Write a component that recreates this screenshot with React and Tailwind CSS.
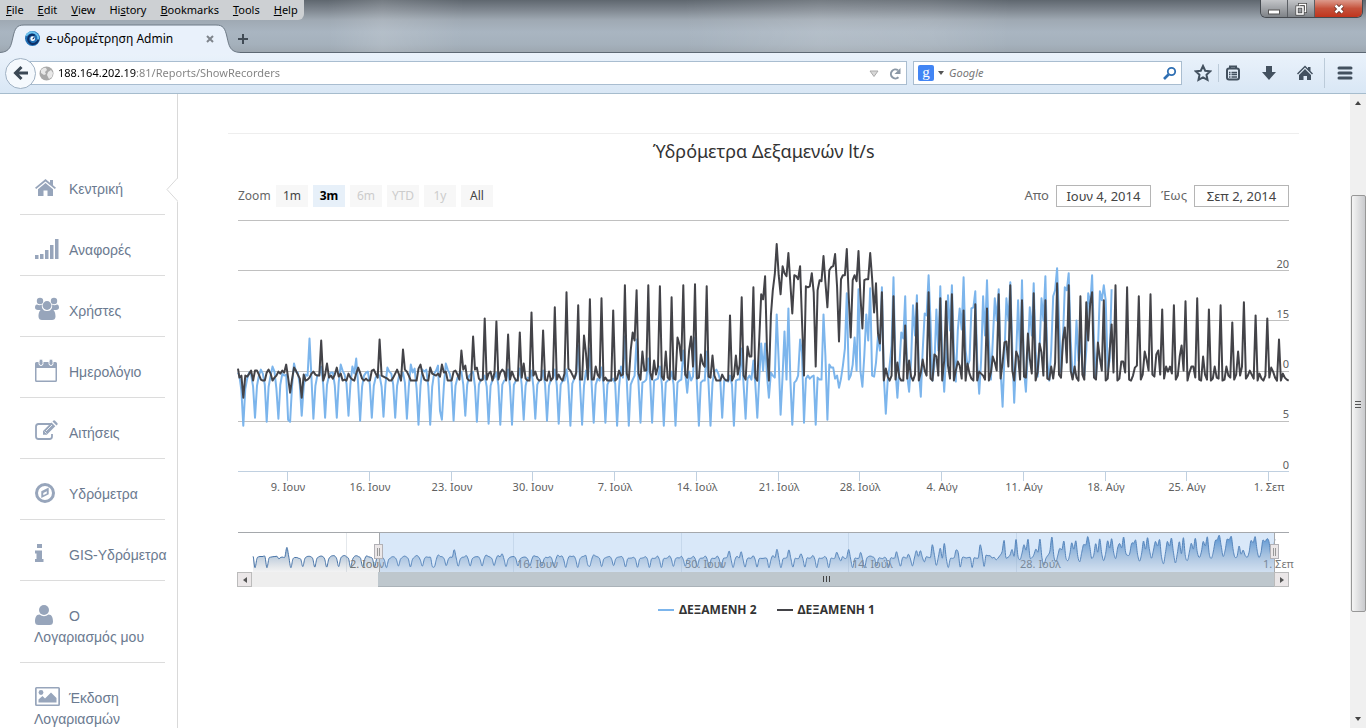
import { useId, useState } from "react";
import clsx from "clsx";

// Six readings a day, in tenths of a litre per second.
const TANK_1 = `
102 93 95 73 95 94|97 100 90 100 100 96|91 90 90 98 101 97|90 93 95 99 97 100|98 106 93 78 91 103|100 96 92 73 96 90
91 93 97 99 96 95|95 130 90 96 107 93|95 92 96 103 94 97|90 91 90 97 93 91|90 97 103 98 92 90|92 90 90 100 101 97
93 131 95 94 93 92|90 90 93 97 101 96|90 121 101 99 95 90|90 90 90 102 106 97|91 90 90 103 97 96|95 97 94 106 98 99
90 90 90 99 100 96|91 120 101 105 92 90|90 134 101 103 92 90|91 152 91 97 99 90|98 149 91 98 101 99|90 136 91 99 94 90
90 138 93 107 92 90|90 158 95 99 92 90|91 140 91 90 99 90|93 163 91 96 92 90|97 178 102 100 96 92|98 165 91 91 135 117
91 171 91 91 104 96|93 172 90 93 90 90|90 160 90 92 100 95|96 185 97 91 120 138|130 180 97 91 119 100|100 185 98 91 110 96
104 184 94 91 119 93|91 173 92 91 133 126|110 185 96 93 120 134|104 186 92 93 116 107|104 184 94 93 115 95|90 90 90 96 92 90
90 155 90 94 115 96|106 173 95 91 124 114|114 183 93 90 130 176|171 194 120 90 155 180|196 226 195 176 204 197|194 217 186 157 195 194
191 204 150 95 184 183|184 197 178 104 180 190|189 214 188 163 200 203|204 216 183 129 191 195|195 221 172 133 190 195|189 219 175 142 190 191
191 217 192 158 187 137|127 178 90 102 94 90|95 174 91 108 93 90|90 145 92 110 94 90|96 167 90 98 111 100|95 178 92 90 116 114
95 172 90 110 169 105|92 176 90 100 109 105|92 160 90 107 97 92|90 166 90 99 97 95|91 162 90 98 114 108
100 176 92 108 128 129|104 185 100 90 119 114|91 170 94 93 137 112|97 177 90 98 127 118|95 170 92 91 104 92|108 187 96 93 130 143
108 185 100 91 104 93|90 174 96 91 168 130|167 178 93 91 128 112|100 170 90 92 119 146|98 185 90 92 109 109|98 183 91 90 95 103
105 174 91 96 119 111|100 176 96 94 116 120|96 161 92 104 99 104|97 165 91 95 114 125|100 169 90 98 104 104|93 172 91 90 114 96
91 161 90 92 104 93|92 165 90 91 104 95|93 148 91 96 119 95|104 168 92 95 100 96|92 155 90 97 92 90|95 152 93 103 99 93|90 131 90 97 93 91|90`;

const TANK_2 = `
98 95 80 45 82 92|98 96 84 53 85 95|101 97 86 49 84 95|104 99 82 52 86 97|95 96 51 49 84 107|99 98 86 55 84 96
95 132 92 52 85 95|96 104 86 53 86 95|98 98 85 53 88 106|100 96 87 55 86 104|97 112 86 50 84 95|98 99 86 53 85 93
96 95 84 54 86 103|99 97 86 53 85 95|93 98 88 52 84 106|98 102 82 46 85 101|99 101 84 46 84 97|100 105 60 51 85 107
101 97 88 50 85 93|97 99 86 55 86 95|97 99 84 49 86 91|92 95 84 47 85 91|93 98 85 46 86 90|91 101 84 46 86 90
92 102 86 51 85 93|92 100 84 52 86 90|91 100 86 50 85 91|92 101 85 47 86 90|90 101 86 45 87 92|96 125 84 46 85 100
92 122 84 48 86 92|90 103 86 48 86 90|90 92 87 45 84 104|93 134 90 45 86 91|95 131 88 48 88 89|91 112 90 48 90 91
92 104 86 45 88 90|92 99 86 45 88 90|91 120 98 78 99 90|94 133 86 45 88 90|90 119 86 45 88 99|101 97 90 53 90 91
89 95 86 45 90 91|91 122 86 52 92 95|91 110 87 53 92 127|100 127 95 73 98 95|93 156 110 56 95 139|91 162 90 46 88 90
95 131 118 48 92 95|92 94 95 46 93 91|91 156 115 51 106 103|103 92 95 83 92 105|122 177 91 95 106 133|100 181 100 84 115 156
130 182 95 94 108 135|120 183 95 57 90 105|125 193 100 73 105 138|132 174 95 79 110 165|135 175 100 74 120 157|155 195 150 90 105 161
120 184 115 79 115 175|140 185 120 89 140 162|141 193 120 105 110 162|163 179 110 77 110 174|135 190 130 91 130 172|150 181 100 64 115 172
150 188 120 68 115 170|113 190 100 79 120 163|135 187 120 94 120 172|150 194 110 90 120 174|180 202 150 99 130 183|180 197 130 94 100 150
110 130 105 95 120 177|165 195 130 94 120 179|170 185 170 100 110 181`;

// The days before the selected range, seen only in the navigator.
const TANK_2_EARLIER = `
100 45 90 98 99 99|98 45 90 96 98 99|100 88 95 96 97 143|95 45 85 94 94 90|85 50 88 98 100 98|88 48 88 97 101 99
86 48 86 99 103 102|88 50 90 101 104 97|88 46 85 100 103 98|90 50 84 102 98 95|88 48 86 95`;

const toReadings = (text) => text.trim().split(/[\s|]+/).map(Number);

const tank1 = toReadings(TANK_1);
const tank2 = toReadings(TANK_2);
const overview = [...toReadings(TANK_2_EARLIER), ...tank2];

const STEP = 1.9467;
const linePoints = (data) =>
  data.map((v, i) => `${Math.max(0, i * STEP - 0.5).toFixed(1)},${(251 - v * 1.004).toFixed(1)}`).join(" ");

// Smooth curve that keeps every peak at its full height.
function overviewPath() {
  const step = 1022 / (overview.length - 1);
  const y = overview.map((v) => 45 - v * 0.207);
  const slope = y.map((v, i) => {
    const before = v - (y[i - 1] ?? v);
    const after = (y[i + 1] ?? v) - v;
    return before * after <= 0 ? 0 : (before + after) / 2;
  });
  let d = `M15,${y[0].toFixed(1)}`;
  for (let i = 1; i < y.length; i++) {
    const x = 15 + i * step;
    const c1 = `${(x - (step * 2) / 3).toFixed(1)},${(y[i - 1] + slope[i - 1] / 3).toFixed(1)}`;
    const c2 = `${(x - step / 3).toFixed(1)},${(y[i] - slope[i] / 3).toFixed(1)}`;
    d += `C${c1} ${c2} ${x.toFixed(1)},${y[i].toFixed(1)}`;
  }
  return d;
}

const weeks = ["9. Ιουν", "16. Ιουν", "23. Ιουν", "30. Ιουν", "7. Ιούλ", "14. Ιούλ", "21. Ιούλ", "28. Ιούλ", "4. Αύγ", "11. Αύγ", "18. Αύγ", "25. Αύγ", "1. Σεπ"];
const ranges = [
  { label: "1m" },
  { label: "3m" },
  { label: "6m", disabled: true },
  { label: "YTD", disabled: true },
  { label: "1y", disabled: true },
  { label: "All" },
];

const icons = {
  home: (
    <>
      <path d="M11.5 5 19 11.300V18h-5.500v-5.500h-4V18H4v-6.700z" />
      <path d="M11.500 1 1 9.700l1.200 1.400 9.300-7.700 9.300 7.700L22 9.700l-3-2.500V2h-3v2.700z" />
    </>
  ),
  signal: <path d="M1 16h3.500v4H1zM6 15h3.500v5H6zM11 11h3.500v9H11zM16 6h3.500v14H16zM21 0h3.500v20H21z" />,
  users: (
    <>
      <circle cx="6" cy="1" r="3.200" />
      <circle cx="20" cy="1" r="3.200" />
      <circle cx="13" cy="5.500" r="4.400" />
      <path d="M3 4.500c1.800 1 3.500 1 5 0-.6 2 .1 4.300 1.600 5.500H4C2 10 1 9 1 7.500 1 6 1.500 4.500 3 4.500zM23 4.500c-1.800 1-3.500 1-5 0 .6 2-.1 4.300-1.600 5.500H22c2 0 3-1 3-2.500 0-1.500-.5-3-2-3z" />
      <path d="M8.500 9.500c3 2 6 2 9 0 3 0 4 3.500 4 7 0 2.500-1.500 3.500-3.500 3.500H8c-2 0-3.500-1-3.500-3.500 0-3.500 1-7 4-7z" />
    </>
  ),
  calendar: (
    <>
      <path fillRule="evenodd" d="M2.500 1h19q1.500 0 1.500 1.500v17q0 1.500-1.500 1.500h-19Q1 21 1 19.500v-17Q1 1 2.500 1zM2.500 7v12.500h19V7z" />
      <rect x="5" y="-2" width="4" height="6.500" rx="2" stroke="white" />
      <rect x="15" y="-2" width="4" height="6.500" rx="2" stroke="white" />
    </>
  ),
  edit: (
    <>
      <path d="M17 2H4.500Q2 2 2 4.500v10Q2 17 4.500 17h11q2.500 0 2.500-2.500V12" fill="none" stroke="currentColor" strokeWidth="1.800" />
      <path d="m9 9 8.500-8.500 3.800 3.800-8.500 8.500H9zM18.500-.5l1-1q.8-.6 1.600.2l2.200 2.200q.8.8.2 1.600l-1 1z" />
      <path d="m10.500 9.500 2 2M12 9l6-6" stroke="white" strokeWidth=".8" />
    </>
  ),
  compass: (
    <>
      <circle cx="11" cy="10" r="8.500" fill="none" stroke="currentColor" strokeWidth="3" />
      <path fillRule="evenodd" d="M14.700 4.500v6.800L7.300 15V8.300zM12.800 8.300 9.300 10v2.200l3.500-1.700z" />
    </>
  ),
  info: <path d="M3 0h5v4H3zM1 6.500h7V15h1.500v3H1v-3h1.500V9.500H1z" />,
  user: (
    <>
      <circle cx="10" cy="5" r="5" />
      <path d="M5.500 9.500q4.500 3.500 9 0C18 9.500 19 13 19 16.500q0 3.500-3.500 3.500h-11Q1 20 1 16.500C1 13 2 9.500 5.500 9.500z" />
    </>
  ),
  image: (
    <>
      <path fillRule="evenodd" d="M2.500 0h22Q26 0 26 1.500v16q0 1.500-1.500 1.500h-22Q1 19 1 17.500v-16Q1 0 2.500 0zM2.700 1.600v15.800h21.600V1.600z" />
      <circle cx="7" cy="5.500" r="2.400" />
      <path d="M4.500 15.500v-3l4-3.500 2.500 2.500 6-6 5.500 5.500v4.500z" />
    </>
  ),
};

const menu = [
  { icon: "home", lines: ["Κεντρική"], active: true },
  { icon: "signal", lines: ["Αναφορές"] },
  { icon: "users", lines: ["Χρήστες"] },
  { icon: "calendar", lines: ["Ημερολόγιο"] },
  { icon: "edit", lines: ["Αιτήσεις"] },
  { icon: "compass", lines: ["Υδρόμετρα"] },
  { icon: "info", lines: ["GIS-Υδρόμετρα"] },
  { icon: "user", lines: ["Ο", "Λογαριασμός μου"] },
  { icon: "image", lines: ["Έκδοση", "Λογαριασμών"] },
];

function TitleBar() {
  const items = [["", "F", "ile"], ["", "E", "dit"], ["", "V", "iew"], ["Hi", "s", "tory"], ["", "B", "ookmarks"], ["", "T", "ools"], ["", "H", "elp"]];
  return (
    <header className="h-[53px] shrink-0 border-b border-[#5d6873] bg-[linear-gradient(90deg,transparent_24%,#ffffff22_28%,transparent_34%,transparent_50%,#ffffff22_60%,#ffffff18_68%,transparent_74%),linear-gradient(180deg,#5f676f_0,#7f8790_10px,#9fa9b3_20px,#a9b5c1_32px,#a5b1bc_44px,#9da7b0_52px)]">
      <div className="flex h-[20px] justify-between">
        <nav className="flex h-[20px] items-center gap-3.5 rounded-br-md bg-[#cdd0d3] px-1.5 text-[11px] text-black">
          {items.map(([pre, key, post]) => (
            <button key={key + post} type="button">
              {pre}<u>{key}</u>{post}
            </button>
          ))}
        </nav>
        <div className="mr-[3px] flex h-[18px] overflow-hidden rounded-b-md border border-t-0 border-[#454a50] text-white">
          <button type="button" aria-label="Minimize" className="grid w-[27px] place-items-center border-r border-[#5b5f64] bg-linear-to-b from-[#c3c5c8] to-[#7e8287]">
            <svg width="12" height="14"><rect x=".5" y="8" width="11" height="4" fill="white" stroke="#555" /></svg>
          </button>
          <button type="button" aria-label="Restore" className="grid w-[27px] place-items-center border-r border-[#5b5f64] bg-linear-to-b from-[#c3c5c8] to-[#7e8287]">
            <svg width="12" height="14" fill="none"><path d="M4.500 4V2.500h6v7H9" stroke="#444" strokeWidth="3" /><path d="M4.500 4V2.500h6v7H9" stroke="white" strokeWidth="1.500" /><rect x="2" y="5" width="6" height="7" stroke="#444" strokeWidth="3" /><rect x="2" y="5" width="6" height="7" stroke="white" strokeWidth="1.600" /></svg>
          </button>
          <button type="button" aria-label="Close" className="grid w-[47px] place-items-center bg-linear-to-b from-[#dc9a8c] via-[#c5513b] to-[#c0341c]">
            <svg width="14" height="14"><path d="m3.500 3.500 7 7m0-7-7 7" stroke="#5a2a22" strokeWidth="4" /><path d="m3.500 3.500 7 7m0-7-7 7" stroke="white" strokeWidth="2.500" /></svg>
          </button>
        </div>
      </div>
      <div className="flex h-[33px] items-end">
        <div className="relative h-[29px] w-[240px]">
          <svg className="absolute inset-0" width="240" height="30">
            <path d="M0 30V28.500C10 28 11 22 13 13 15 4 17 1 24 1H216C223 1 225 4 227 13 229 22 230 28 240 28.500V30z" fill="#e9f1fb" />
            <path d="M0 28.500C10 28 11 22 13 13 15 4 17 1 24 1H216C223 1 225 4 227 13 229 22 230 28 240 28.500" fill="none" stroke="#6f7b87" />
          </svg>
          <div className="relative flex h-full items-center pl-[25px] text-[12px] text-black">
            <svg width="15" height="15" viewBox="0 0 14 14" fill="none">
              <circle cx="7" cy="7" r="7" fill="#1f6fb5" />
              <path d="M1 4.500Q4.500-.5 9.500 2 14 5 11.500 9.500" stroke="#6fc3ee" strokeWidth="1.600" />
              <path d="M12.500 8Q11 13 6 12 2 10 3.200 6 5 2.500 9 4" stroke="#0d2f66" strokeWidth="1.800" />
              <circle cx="7.200" cy="7.200" r="2.200" fill="white" />
              <path d="M7 7.500q1.500-.2 1.500-1.800" stroke="#0d2f66" />
            </svg>
            <span className="ml-1.5 grow">e-υδρομέτρηση Admin</span>
            <button type="button" aria-label="Close tab" className="mr-[26px]">
              <svg width="8" height="8"><path d="m1 1 6 6m0-6-6 6" stroke="#7f858c" strokeWidth="2" /></svg>
            </button>
          </div>
        </div>
        <button type="button" aria-label="New tab" className="mb-2 ml-[-3px]">
          <svg width="12" height="12"><path d="M6 1v10M1 6h10" stroke="#414b55" strokeWidth="2" /></svg>
        </button>
      </div>
    </header>
  );
}

function Toolbar() {
  return (
    <div className="flex h-[41px] shrink-0 items-center border-b border-[#a6bccd] bg-linear-to-b from-[#eaf2fb] to-[#d9e7f5] text-[11px]">
      <button type="button" aria-label="Back" className="z-10 ml-[5px] grid size-[31px] shrink-0 place-items-center rounded-full border border-[#9fb1c3] bg-[#f5f9fd]">
        <svg width="16" height="16" fill="none" stroke="#3b4855" strokeWidth="3"><path d="M15 8H3M8.500 2 2.500 8l6 6" /></svg>
      </button>
      <div className="-ml-2 flex h-[24px] grow items-center gap-1 border border-[#a9bdd0] bg-white pt-px pr-1 pl-[10px]">
        <svg width="15" height="15" viewBox="0 0 15 15">
          <circle cx="7.500" cy="7.500" r="7" fill="#a9a9a9" />
          <path d="M2 4q3-3 5-2l1 2-2 2 1 2-2 1-3-2zM9 6l3-2 2 3-1 4-3 2-2-4z" fill="#e8e8e8" />
        </svg>
        <input
          aria-label="Address"
          defaultValue="188.164.202.19:81/Reports/ShowRecorders"
          className="min-w-0 grow bg-[linear-gradient(90deg,#000_78px,#808080_78px)] bg-clip-text text-transparent outline-none"
        />
        <svg width="12" height="10"><path d="M2 2h8L6 7.500z" fill="#d8d8d8" stroke="#aaa" /></svg>
        <button type="button" aria-label="Reload" className="ml-1">
          <svg width="14" height="14" fill="none"><path d="M10.500 10.300A4.500 4.500 0 1 1 10 3.300" stroke="#8b98a6" strokeWidth="2" /><path d="M12.500 1v6h-6z" fill="#8b98a6" /></svg>
        </button>
      </div>
      <div className="ml-[6px] flex h-[24px] w-[269px] items-center border border-[#a9bdd0] bg-white px-1">
        <span className="grid size-4 place-items-center rounded-xs bg-[#4285f4] pb-1 font-['Liberation_Serif',serif] text-[15px] leading-none text-white">g</span>
        <svg className="ml-1" width="7" height="5"><path d="M0 0h6L3 4z" fill="#555" /></svg>
        <input aria-label="Search" placeholder="Google" className="ml-1 min-w-0 grow pt-px italic outline-none placeholder:text-[#777]" />
        <button type="button" aria-label="Go">
          <svg width="14" height="14" fill="none" stroke="#2f6fb3"><circle cx="8.500" cy="5.500" r="3.700" strokeWidth="1.800" /><path d="M5.500 8.500 1 13" strokeWidth="2.600" /></svg>
        </button>
      </div>
      <div className="ml-3 flex h-full items-center text-[#43515f]">
        <button type="button" aria-label="Bookmark this page">
          <svg width="18" height="18" fill="none" stroke="currentColor" strokeWidth="2"><path d="m9 2 2.200 4.700 5 .6-3.700 3.500 1 5L9 13.300l-4.500 2.500 1-5L1.800 7.300l5-.6z" /></svg>
        </button>
        <span className="ml-1.5 h-[18px] w-px bg-[#bccbd9]" />
        <button type="button" aria-label="Bookmarks" className="ml-1.5">
          <svg width="16" height="16" fill="none" stroke="currentColor"><rect x="2" y="3.500" width="12" height="11" rx="2" strokeWidth="2" /><path d="M5 3V1.500h6V3" strokeWidth="2" /><path d="M4 7.500h1.500m1 0H12M4 9.500h1.500m1 0H12M4 12h1.500m1 0H12" strokeWidth="1.300" /></svg>
        </button>
        <button type="button" aria-label="Downloads" className="ml-5">
          <svg width="16" height="16" fill="currentColor"><path d="M5 1h6v6h4l-7 8-7-8h4z" /></svg>
        </button>
        <button type="button" aria-label="Home" className="ml-5">
          <svg width="16" height="16" fill="currentColor"><path d="M8 .5 11 3.500V2h2.500v4L16 8.500l-1 1-7-7-7 7-1-1z" /><path d="m8 4 6 6v5h-4v-4H6.500v4H2v-5z" /></svg>
        </button>
        <span className="ml-[11px] h-[30px] w-px bg-[#bccbd9]" />
        <button type="button" aria-label="Open menu" className="mr-[13px] ml-3">
          <svg width="16" height="14" fill="none" stroke="currentColor" strokeWidth="3" strokeLinecap="round"><path d="M2 2h12M2 7h12M2 12h12" /></svg>
        </button>
      </div>
    </div>
  );
}

function Sidebar() {
  return (
    <nav className="w-[178px] shrink-0 border-r border-[#d9d9d9] pt-[60px] pr-3 pl-5 font-['Liberation_Sans',sans-serif] text-[14px] leading-[21px] text-[#6b7a90]">
      {menu.map((item) => (
        <div key={item.icon} className="relative border-b border-[#dcdcdc] pt-[25px] pb-[14px] pl-[14px] whitespace-nowrap">
          <a href="#" className="block">
            <span className="flex">
              <svg className="-mt-px w-[35px] shrink-0 overflow-visible text-[#97a5bb]" height="21" fill="currentColor">{icons[item.icon]}</svg>
              {item.lines[0]}
            </span>
            {item.lines[1]}
          </a>
          {item.active && (
            <svg className="absolute top-[23px] left-full" width="13" height="26">
              <path d="M13 1 2 12.500 13 25z" fill="white" />
              <path d="M12.500 1 2 12.500 12.500 24" fill="none" stroke="#d9d9d9" />
            </svg>
          )}
        </div>
      ))}
    </nav>
  );
}

function MainChart({ hidden }) {
  return (
    <svg viewBox="0 0 1051 280" className="mt-[13px] block w-full overflow-visible text-[11px]" fill="none">
      {[0.5, 50.5, 100.5, 151.5, 201.5].map((y) => (
        <path key={y} d={`M0 ${y}H1051`} stroke="#c0c0c0" />
      ))}
      <path d="M0 251.500H1051" stroke="#c0d0e0" />
      {!hidden.includes("ΔΕΞΑΜΕΝΗ 2") && <polyline points={linePoints(tank2)} stroke="#7cb5ec" strokeWidth="2" strokeLinejoin="round" />}
      {!hidden.includes("ΔΕΞΑΜΕΝΗ 1") && <polyline points={linePoints(tank1)} stroke="#434348" strokeWidth="2" strokeLinejoin="round" />}
      {[20, 15, 10, 5, 0].map((v) => (
        <text key={v} x="1051" y={248.5 - v * 10.04} textAnchor="end" fill="#606060">{v === 10 ? "0" : v}</text>
      ))}
      {weeks.map((week, i) => {
        const x = Math.round(49 + i * 81.77);
        return (
          <g key={week}>
            <path d={`M${x + 0.5} 252v9`} stroke="#c0d0e0" />
            <text x={x + 1} y="271" textAnchor="middle" fill="#606060">{week}</text>
          </g>
        );
      })}
    </svg>
  );
}

function Navigator() {
  const id = useId();
  const path = overviewPath();
  const labels = [["2. Ιουν", 108], ["16. Ιουν", 275], ["30. Ιουν", 443], ["14. Ιούλ", 610], ["28. Ιούλ", 778], ["1. Σεπ", 1021]];
  return (
    <>
      <svg viewBox="0 0 1051 40" className="mt-8 block w-full overflow-visible text-[11px]" fill="none">
        <defs>
          <linearGradient id={id} x1="0" y1="0" x2="0" y2="1">
            <stop offset="0" stopColor="#3f86cc" />
            <stop offset="1" stopColor="#a8acb2" stopOpacity="0.150" />
          </linearGradient>
        </defs>
        {labels.slice(0, 5).map(([label, x]) => (
          <path key={label} d={`M${x + 0.5} 1v39`} stroke="#e4e8ec" />
        ))}
        <path d={`${path}L1037,38V40H15z`} fill={`url(#${id})`} />
        <path d={path} stroke="#4572a7" />
        {labels.map(([label, x]) => (
          <text key={label} x={x + 4} y="36" fill="#777">{label}</text>
        ))}
        <path d="M141 0h896v40H141z" fill="#80b3ec" fillOpacity="0.300" />
        <path d="M0 .5h1051M141.500 0v40M1036.500 0v40" stroke="#a5a8ac" />
        {[137, 1033].map((x) => (
          <g key={x}>
            <rect x={x - 0.5} y="12.500" width="8" height="14" fill="#ebe7e8" stroke="#b2b1b6" />
            <path d={`M${x + 2.5} 16v8m2-8v8`} stroke="#999" />
          </g>
        ))}
      </svg>
      <div className="-ml-px flex h-[15px] bg-[#eee]">
        <button type="button" aria-label="Scroll left" className="grid w-[15px] place-items-center border border-[#bbb] bg-[#ebe7e8]">
          <svg width="4" height="6"><path d="M4 0v6L0 3z" fill="#555" /></svg>
        </button>
        <span className="w-[12%]" />
        <span className="grid grow place-items-center border-b border-[#aab2b8] bg-[#bec7cd]">
          <svg width="8" height="6" stroke="#444"><path d="M1.500 0v6m3-6v6m3-6v6" /></svg>
        </span>
        <button type="button" aria-label="Scroll right" className="grid w-[15px] place-items-center border border-[#bbb] bg-[#ebe7e8]">
          <svg width="4" height="6"><path d="M0 0v6l4-3z" fill="#555" /></svg>
        </button>
      </div>
    </>
  );
}

function Report() {
  const [range, setRange] = useState("3m");
  const [hidden, setHidden] = useState([]);
  const toggle = (name) => setHidden((prev) => (prev.includes(name) ? prev.filter((n) => n !== name) : [...prev, name]));

  return (
    <main className="mr-[51px] ml-[50px] min-w-0 grow pt-[39px]">
      <section className="border-t border-[#eee] px-[10px] font-['Noto_Sans',sans-serif] text-[12px] text-[#444]">
        <h1 className="mt-[6px] mb-[23px] text-center text-[18px] leading-[22px] text-[#333]">΄Υδρόμετρα Δεξαμενών lt/s</h1>
        <div className="flex h-[22px] items-center text-[#666]">
          <span className="w-[38px]">Zoom</span>
          <div className="flex gap-[5px]">
            {ranges.map(({ label, disabled }) => (
              <button
                key={label}
                type="button"
                disabled={disabled}
                onClick={() => setRange(label)}
                className={clsx(
                  "h-[22px] w-8",
                  label === range ? "bg-[#e7f0f9] font-bold text-black" : "bg-[#f7f7f7] text-[#444] disabled:text-[#ccc]",
                )}
              >
                {label}
              </button>
            ))}
          </div>
          <div className="ml-auto flex items-center text-[13px]">
            <label htmlFor="from" className="mr-[7px]">Απο</label>
            <input id="from" defaultValue="Ιουν 4, 2014" className="h-[22px] w-[95px] border border-[#b5b5b5] text-center text-[#444]" />
            <label htmlFor="to" className="mr-[7px] ml-[10px]">Έως</label>
            <input id="to" defaultValue="Σεπ 2, 2014" className="h-[22px] w-[95px] border border-[#b5b5b5] text-center text-[#444]" />
          </div>
        </div>
        <MainChart hidden={hidden} />
        <Navigator />
        <div className="mt-[15px] flex justify-center gap-5 pl-[6px] text-[12px] leading-4 font-bold text-[#333]">
          <button type="button" onClick={() => toggle("ΔΕΞΑΜΕΝΗ 2")} className="flex items-center gap-[5px]">
            <span className="h-[2px] w-4 bg-[#7cb5ec]" />
            ΔΕΞΑΜΕΝΗ 2
          </button>
          <button type="button" onClick={() => toggle("ΔΕΞΑΜΕΝΗ 1")} className="flex items-center gap-[5px]">
            <span className="h-[2px] w-4 bg-[#434348]" />
            ΔΕΞΑΜΕΝΗ 1
          </button>
        </div>
      </section>
    </main>
  );
}

function ScrollBar() {
  return (
    <div className="flex w-4 shrink-0 flex-col items-center bg-[#f0f0f0] py-1.5">
      <svg width="8" height="5"><path d="M1 5h6L4 1z" fill="#444" /></svg>
      <div className="h-[14.500%]" />
      <div className="grid h-[67%] w-[15px] place-items-center rounded-xs border border-[#979797] bg-linear-to-r from-[#f5f5f5] to-[#c9cacd]">
        <svg width="6" height="8" stroke="#555"><path d="M0 1.500h6m-6 3h6m-6 3h6" /></svg>
      </div>
      <svg className="mt-auto" width="8" height="5"><path d="M1 0h6L4 4z" fill="#444" /></svg>
    </div>
  );
}

export default function App() {
  return (
    <div className="flex h-screen flex-col overflow-hidden bg-white font-['Noto_Sans',sans-serif]">
      <TitleBar />
      <Toolbar />
      <div className="flex min-h-0 grow">
        <Sidebar />
        <Report />
        <ScrollBar />
      </div>
    </div>
  );
}
